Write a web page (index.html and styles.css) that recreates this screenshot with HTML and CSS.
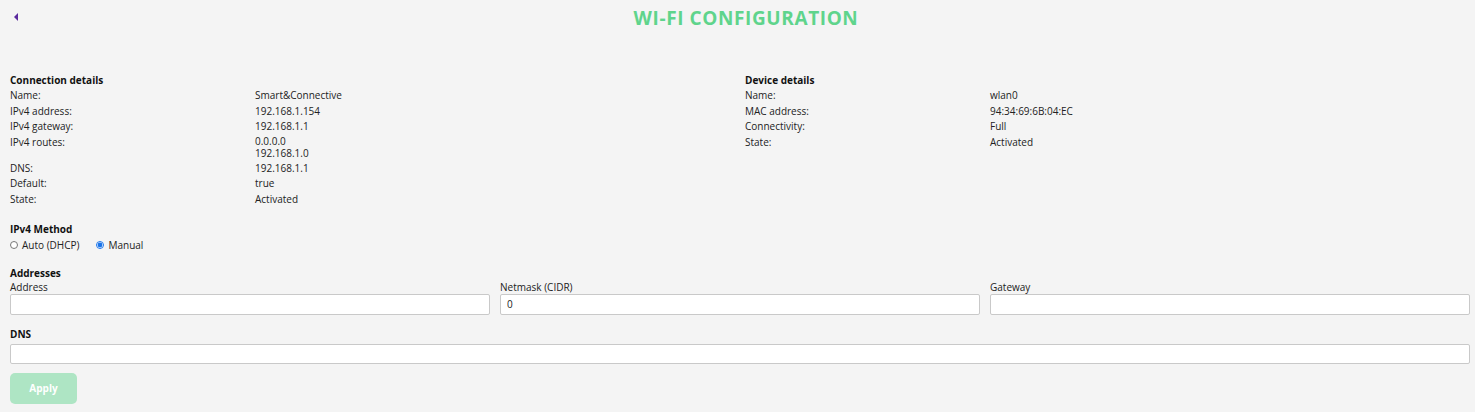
FILE: index.html
```html
<!DOCTYPE html>
<html lang="en">
<head>
  <meta charset="UTF-8">
  <meta name="viewport" content="width=device-width, initial-scale=1.0">
  <title>Wi-Fi Configuration</title>
  <link rel="stylesheet" href="styles.css">
</head>
<body>
  <header class="top-bar">
    <a class="back" href="#"><svg width="6" height="8" viewBox="0 0 6 8"><path d="M5 0 L1 4 L5 8 Z" fill="#5b2a9e"/></svg></a>
    <h1>WI-FI CONFIGURATION</h1>
  </header>

  <div class="details">
    <section class="detail-block">
      <h2>Connection details</h2>
      <div class="row"><span>Name:</span><span>Smart&amp;Connective</span></div>
      <div class="row"><span>IPv4 address:</span><span>192.168.1.154</span></div>
      <div class="row"><span>IPv4 gateway:</span><span>192.168.1.1</span></div>
      <div class="row"><span>IPv4 routes:</span><div class="multi"><div>0.0.0.0</div><div>192.168.1.0</div></div></div>
      <div class="row"><span>DNS:</span><span>192.168.1.1</span></div>
      <div class="row"><span>Default:</span><span>true</span></div>
      <div class="row"><span>State:</span><span>Activated</span></div>
    </section>
    <section class="detail-block">
      <h2>Device details</h2>
      <div class="row"><span>Name:</span><span>wlan0</span></div>
      <div class="row"><span>MAC address:</span><span>94:34:69:6B:04:EC</span></div>
      <div class="row"><span>Connectivity:</span><span>Full</span></div>
      <div class="row"><span>State:</span><span>Activated</span></div>
    </section>
  </div>

  <form class="config">
    <h2>IPv4 Method</h2>
    <div class="radios">
      <label><input type="radio" name="method"> Auto (DHCP)</label>
      <label><input type="radio" name="method" checked> Manual</label>
    </div>

    <h2 class="addr-title">Addresses</h2>
    <div class="fields">
      <label class="field">Address<input type="text"></label>
      <label class="field">Netmask (CIDR)<input type="text" value="0"></label>
      <label class="field">Gateway<input type="text"></label>
    </div>

    <h2 class="dns-title">DNS</h2>
    <input class="dns-input" type="text">

    <button type="button" class="apply" disabled>Apply</button>
  </form>
</body>
</html>
```

FILE: styles.css
```css
body {
  margin: 0;
  padding: 0 5px 0 10px;
  background-color: #f4f4f4;
  color: #222;
  font-family: "Open Sans", "Noto Sans", sans-serif;
  font-size: 10px;
}

.top-bar {
  position: relative;
  height: 36px;
  padding-left: 12px;
  display: flex;
  align-items: center;
  justify-content: center;
}

.back {
  position: absolute;
  left: 3px;
  top: 13px;
  display: block;
  line-height: 0;
}

h1 {
  margin: 0;
  color: #5fd48c;
  font-size: 19px;
  font-weight: 700;
  letter-spacing: 0.6px;
}

h2 {
  margin: 0;
  font-size: 10px;
  font-weight: 700;
  color: #111;
  line-height: 15px;
}

.details {
  display: grid;
  grid-template-columns: 1fr 1fr;
  gap: 10px;
  margin-top: 37px;
}

.row {
  display: grid;
  grid-template-columns: 245px 1fr;
  line-height: 15.6px;
}

.row .multi {
  line-height: 11.4px;
  padding: 1.6px 0;
}

.config {
  margin-top: 14px;
}

.radios {
  display: flex;
  gap: 17px;
  line-height: 17px;
}

.radios label {
  display: flex;
  align-items: center;
  gap: 4px;
}

.radios input {
  margin: 0;
  width: 8px;
  height: 8px;
  accent-color: #1a73e8;
}

.addr-title {
  margin-top: 12px;
}

.fields {
  display: grid;
  grid-template-columns: 1fr 1fr 1fr;
  gap: 10px;
}

.field {
  display: flex;
  flex-direction: column;
  line-height: 13px;
}

input[type="text"] {
  box-sizing: border-box;
  height: 21px;
  margin: 0;
  padding: 0 6px;
  border: 1px solid #c9c9c9;
  border-radius: 2px;
  background: #fff;
  font-family: inherit;
  font-size: 10px;
  color: #222;
}

.dns-title {
  margin-top: 10px;
  line-height: 19px;
}

.dns-input {
  display: block;
  width: 100%;
  height: 20px !important;
}

.apply {
  display: block;
  margin-top: 9px;
  width: 67px;
  height: 31px;
  border: none;
  border-radius: 5px;
  background-color: #aee5c4;
  color: #fff;
  font-family: inherit;
  font-size: 10px;
  font-weight: 700;
}
```
